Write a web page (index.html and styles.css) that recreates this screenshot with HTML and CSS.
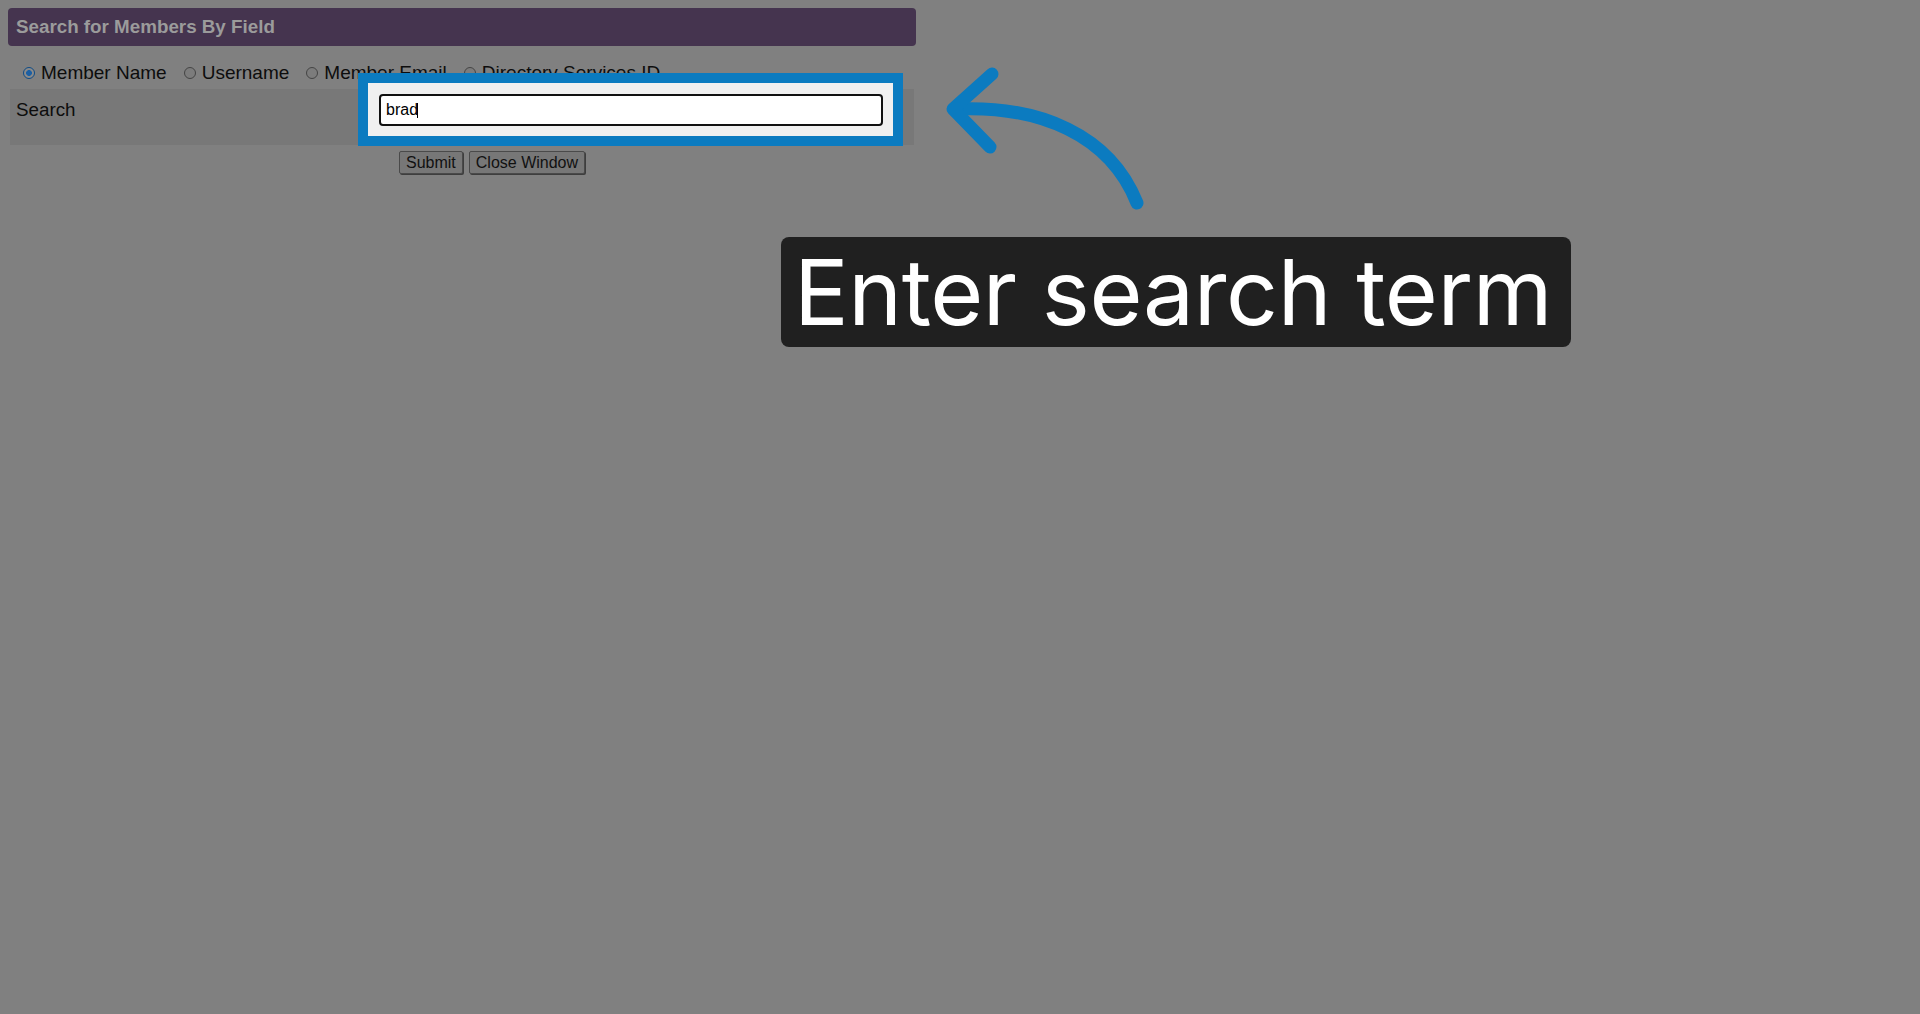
FILE: index.html
```html
<!DOCTYPE html>
<html lang="en">
<head>
<meta charset="utf-8">
<title>Search for Members By Field</title>
<link rel="stylesheet" href="styles.css">
</head>
<body>
<div class="page">
  <div class="header">Search for Members By Field</div>
  <div class="radios">
    <label class="opt"><input type="radio" name="field" checked><span>Member Name</span></label>
    <label class="opt"><input type="radio" name="field"><span>Username</span></label>
    <label class="opt"><input type="radio" name="field"><span>Member Email</span></label>
    <label class="opt"><input type="radio" name="field"><span>Directory Services ID</span></label>
  </div>
  <div class="row">
    <div class="label">Search</div>
    <div class="field">
      <span class="spot"><input class="search" type="text" value="brad"><span class="caret"></span></span>
    </div>
  </div>
  <div class="buttons">
    <button type="button">Submit</button>
    <button type="button">Close Window</button>
  </div>
</div>
<svg class="arrow" width="230" height="160" viewBox="0 0 230 160">
  <path d="M25 49 C110 45 180 75 207 143" />
  <path d="M62 14 L23 49 L60 87" />
</svg>
<div class="callout">Enter search term</div>
</body>
</html>
```
FILE: styles.css
```css
html, body {
  margin: 0;
  padding: 0;
}
body {
  background: #808080;
  width: 1920px;
  height: 1014px;
  overflow: hidden;
  position: relative;
  font-family: "Liberation Sans", Arial, sans-serif;
  color: #0d0d0d;
}
.page {
  padding: 8px;
}
.header {
  width: 900px;
  height: 38px;
  line-height: 38px;
  padding-left: 8px;
  background: #45344f;
  border-radius: 4px;
  color: #9b9b9b;
  font-weight: bold;
  font-size: 18.8px;
}
.radios {
  display: flex;
  align-items: center;
  gap: 17px;
  height: 22px;
  margin: 16px 0 5px 15px;
  font-size: 19px;
}
.opt {
  display: flex;
  align-items: center;
  gap: 6px;
}
.opt input {
  appearance: none;
  -webkit-appearance: none;
  margin: 0;
  width: 12px;
  height: 12px;
  border-radius: 50%;
  border: 1px solid #444;
  background: #7c7c7c;
  box-sizing: border-box;
}
.opt input:checked {
  border: 1px solid #0e4b86;
  background: radial-gradient(circle, #1c5fa3 0 2.6px, #8a8a8a 3.2px 100%);
}
.row {
  display: flex;
  width: 904px;
  height: 56px;
  margin-left: 2px;
  background: #787878;
}
.label {
  width: 363px;
  padding: 10px 0 0 6px;
  font-size: 18.8px;
}
.field {
  padding-top: 5px;
}
.spot {
  position: relative;
  display: block;
}
.spot::before {
  content: "";
  position: absolute;
  left: -21px;
  right: -20px;
  top: -21px;
  bottom: -20px;
  border: 10px solid #0b7bc0;
  background: #f0f0f0;
}
.search {
  position: relative;
  display: block;
  box-sizing: border-box;
  width: 504px;
  height: 32px;
  margin: 0;
  padding: 0 5px;
  border: 2px solid #111;
  border-radius: 4px;
  background: #fff;
  font-family: "Liberation Sans", Arial, sans-serif;
  font-size: 16px;
  color: #000;
  outline: none;
}
.caret {
  position: absolute;
  left: 38px;
  top: 9px;
  width: 1px;
  height: 15px;
  background: #000;
}
.buttons {
  display: flex;
  gap: 6px;
  margin: 6px 0 0 391px;
}
.buttons button {
  height: 23px;
  padding: 0 6px;
  margin: 0;
  font-family: "Liberation Sans", Arial, sans-serif;
  font-size: 16px;
  color: #111;
  background: #777;
  border: 1px solid #4a4a4a;
  border-radius: 2px;
  box-shadow: 1px 1px 0 #3e3e3e;
}
.arrow {
  position: absolute;
  left: 930px;
  top: 60px;
  fill: none;
  stroke: #0b7bc0;
  stroke-width: 13;
  stroke-linecap: round;
  stroke-linejoin: round;
}
.callout {
  position: absolute;
  left: 781px;
  top: 237px;
  width: 777px;
  height: 110px;
  padding-left: 13px;
  background: #202020;
  border-radius: 8px;
  color: #fff;
  font-family: Inter, "Noto Sans", sans-serif;
  font-size: 91px;
  letter-spacing: -0.4px;
  line-height: 110px;
  white-space: nowrap;
}
```
